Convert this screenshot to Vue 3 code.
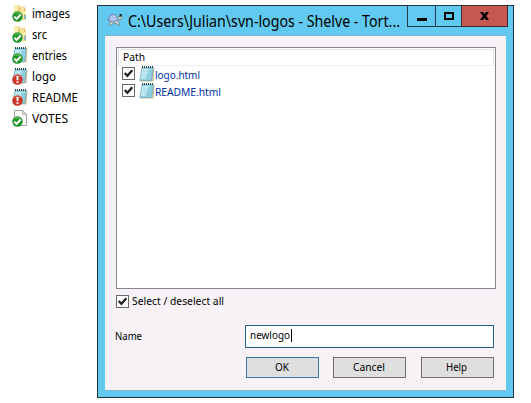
<script setup>
import { ref, h } from 'vue'

const entries = [
  { name: 'images', kind: 'folder', state: 'ok', width: 38 },
  { name: 'src', kind: 'folder', state: 'ok', width: 15 },
  { name: 'entries', kind: 'note', state: 'ok', width: 35 },
  { name: 'logo', kind: 'note', state: 'modified', width: 24 },
  { name: 'README', kind: 'note', state: 'modified', width: 46 },
  { name: 'VOTES', kind: 'page', state: 'ok', width: 36 }
]
const paths = ref([
  { name: 'logo.html', checked: true, width: 45 },
  { name: 'README.html', checked: true, width: 66 }
])
const all = ref(true)
const name = ref('newlogo')

// Label whose glyphs are fitted to a fixed advance width.
const Label = ({ text, width, size = 12 }) =>
  h('svg', { width: width + 2, height: size + 6, style: { display: 'block', overflow: 'visible', flex: 'none' } }, [
    h('text', { x: 0, y: size + 1, 'font-size': size, textLength: width, lengthAdjust: 'spacingAndGlyphs', fill: 'currentColor' }, text)
  ])
Label.props = ['text', 'width', 'size']

const Note = () =>
  h('svg', { width: 16, height: 16, viewBox: '0 0 16 16', style: { display: 'block' } }, [
    h('path', { d: 'M3 2H15.5L14.5 15.5H1Z', fill: '#c9bf9c' }),
    h('path', { d: 'M3 1.5H14.3L12.5 14.5H.8Z', fill: '#8fcfe2', stroke: '#6fa9bd', 'stroke-width': 0.7 }),
    h('path', { d: 'M3.4 3H10L6.5 13H1.6Z', fill: '#c3eaf2' }),
    h('path', { d: 'M4 5.5H12.5M3.7 7.5H12.2M3.4 9.5H11.9M3.1 11.5H11.6', stroke: '#8ccbdc', 'stroke-width': 0.4 }),
    h('path', { d: 'M3 1H14', stroke: '#33474f', 'stroke-width': 2, 'stroke-dasharray': '1 1' })
  ])
const Tick = () =>
  h('svg', { width: 11, height: 11, viewBox: '0 0 11 11', style: { display: 'block' } }, [
    h('path', { d: 'M1.7 5L4.4 7.8L9.3 2.3', fill: 'none', stroke: '#222', 'stroke-width': 2.3 })
  ])
</script>

<template>
  <main class="desktop">
    <ul class="files">
      <li v-for="e in entries" :key="e.name">
        <span class="icon">
          <svg v-if="e.kind === 'folder'" width="16" height="16" viewBox="0 0 16 16">
            <path d="M2 0H7L8 2H13V5H14V15H2Z" fill="#f0d780" />
            <path d="M2 0H6V14H2Z" fill="#f9edb0" />
            <path d="M7 3H12V14H7Z" fill="#f7e6a2" />
            <path d="M7.5 3V13M12.5 3V14" stroke="#d9b858" stroke-width=".8" />
            <path d="M12 6H14V9H12Z" fill="#fff3bd" />
            <path d="M12.5 10H14V14H12.5Z" fill="#75b4d8" />
          </svg>
          <Note v-else-if="e.kind === 'note'" />
          <svg v-else width="16" height="16" viewBox="0 0 16 16">
            <path d="M2.5.5H10.5L14.5 4.5V15.5H2.5Z" fill="#fbfbfb" stroke="#a5a5a5" />
            <path d="M10.5.5V4.5H14.5Z" fill="#ddd" stroke="#a5a5a5" stroke-width=".8" />
          </svg>
          <svg class="badge" width="11" height="11" viewBox="0 0 11 11">
            <template v-if="e.state === 'ok'">
              <circle cx="5.5" cy="5.5" r="5.2" fill="#21942b" />
              <path d="M1.5 3.3A5 5 0 0 1 9.5 3.3Q5 1.8 1.5 3.3Z" fill="#63bd5e" />
              <path d="M2.3 5.6L4.6 7.8L8.7 3.5" fill="none" stroke="#fff" stroke-width="1.9" />
            </template>
            <template v-else>
              <circle cx="5.5" cy="5.5" r="5.2" fill="#cc3527" />
              <path d="M1.5 3.3A5 5 0 0 1 9.5 3.3Q5 1.8 1.5 3.3Z" fill="#e37c67" />
              <path d="M5.5 2V6.3M5.5 7.3V9" stroke="#fff" stroke-width="1.9" />
            </template>
          </svg>
        </span>
        <Label :text="e.name" :width="e.width" />
      </li>
    </ul>

    <section class="window">
      <header class="titlebar">
        <svg class="turtle" width="17" height="14" viewBox="0 0 17 14">
          <path d="M1 6L4 9L3 12H6L7 10H10L11 12H14L12 8L14 6H16V3H13L11 7L3 8Z" fill="#cbd1cf" stroke="#697e88" stroke-width=".7" />
          <path d="M3 8Q2 2 7 1.5Q11 1.5 12 7Q8 10 3 8Z" fill="#afc5f2" stroke="#7489b2" />
          <path d="M13 1H16V4H13Z" fill="#617b82" />
          <path d="M14 1H16V3H14Z" fill="#183944" />
        </svg>
        <Label class="title" text="C:\Users\Julian\svn-logos - Shelve - Tort..." :width="272" :size="16" />
        <div class="controls">
          <button class="min"><svg width="10" height="9"><path d="M0 6H10V9H0Z" /></svg></button>
          <button class="max"><svg width="10" height="8"><path d="M1 1H9V7H1Z" fill="none" stroke="#000" stroke-width="2" /></svg></button>
          <button class="close"><svg width="9" height="8"><path d="M0 0H3L4.5 2L6 0H9L6.2 4L9 8H6L4.5 6L3 8H0L2.8 4Z" /></svg></button>
        </div>
      </header>
      <div class="client">
        <div class="list">
          <div class="head"><Label text="Path" :width="22" :size="11" /></div>
          <div v-for="p in paths" :key="p.name" class="row">
            <span class="box" @click="p.checked = !p.checked"><Tick v-if="p.checked" /></span>
            <Note class="file" />
            <Label class="path" :text="p.name" :width="p.width" :size="11" />
          </div>
        </div>
        <div class="select">
          <span class="box" @click="all = !all"><Tick v-if="all" /></span>
          <Label text="Select / deselect all" :width="92" :size="11" />
        </div>
        <div class="field">
          <Label class="name" text="Name" :width="27" :size="11" />
          <div class="input"><Label :text="name" :width="40" :size="11" /><i class="caret" /></div>
        </div>
        <div class="actions">
          <button class="default"><Label text="OK" :width="14" :size="11" /></button>
          <button class="cancel"><Label text="Cancel" :width="32" :size="11" /></button>
          <button><Label text="Help" :width="21" :size="11" /></button>
        </div>
      </div>
    </section>
  </main>
</template>

<style>
body { background: #fff; }
</style>

<style scoped>
* { box-sizing: border-box; }
.desktop { width: 531px; height: 403px; padding-top: 5px; display: flex; align-items: flex-start; overflow: hidden; background: #fff; color: #000; font-family: "Noto Sans", "Open Sans", sans-serif; }
.files { width: 97px; margin: 0; padding: 0 0 0 12px; list-style: none; flex: none; }
.files li { height: 21px; display: flex; align-items: flex-start; gap: 4px; }
.icon { width: 16px; height: 16px; position: relative; flex: none; }
.icon svg { display: block; }
.icon .badge { position: absolute; left: 0; bottom: -1px; }
.window { width: 417px; height: 393px; border: 1px solid #232f38; background: #62caf0; padding: 0 7px; flex: none; }
.titlebar { height: 29px; display: flex; align-items: flex-start; }
.turtle { margin: 7px 5px 0 1px; flex: none; }
.title { margin-top: 4px; }
.controls { display: flex; margin: -1px -2px 0 auto; flex: none; }
.controls button { height: 22px; padding: 0; border: 1px solid #1d3a4a; background: #62caf0; display: flex; align-items: center; justify-content: center; }
.controls .min { width: 29px; }
.controls .max { width: 27px; margin-left: -1px; }
.controls .close { width: 47px; margin-left: -1px; background: #c75850; border-color: #3f2d31; }
.client { width: 401px; height: 356px; padding: 11px 10px 0 11px; border-top: 1px solid #86b3c8; border-bottom: 1px solid #86b3c8; background: #f6f2f6; }
.list { height: 242px; padding: 1px; border: 1px solid #828790; background: #fff; }
.head { height: 17px; padding-left: 4px; border: 1px solid #e3e0e3; border-bottom-color: #f0eef0; display: flex; align-items: center; }
.row { height: 17px; padding-left: 4px; display: flex; align-items: flex-start; color: #0032a0; }
.row .box { margin-top: 1px; }
.file { margin: 0 0 0 4px; flex: none; }
.path { margin-top: 1px; }
.box { width: 13px; height: 13px; border: 1px solid #666; background: #fff; flex: none; }
.select { height: 13px; margin-top: 6px; display: flex; align-items: center; gap: 3px; }
.field { height: 23px; margin-top: 17px; display: flex; align-items: center; justify-content: space-between; padding-right: 2px; }
.name { margin-left: -1px; }
.input { width: 249px; height: 23px; padding: 0 0 2px 4px; border: 1px solid #24628f; background: #fff; display: flex; align-items: center; }
.caret { width: 1px; height: 13px; margin-left: -1px; background: #000; }
.actions { display: flex; justify-content: flex-end; gap: 14px; margin-top: 9px; padding-right: 2px; }
.actions button { width: 73px; height: 21px; padding: 0; border: 1px solid #707070; background: #dfdfdf; font: inherit; color: #000; display: flex; align-items: center; justify-content: center; }
.actions .cancel { margin-right: 1px; }
.actions .default { border-color: #3777ae; }
</style>
